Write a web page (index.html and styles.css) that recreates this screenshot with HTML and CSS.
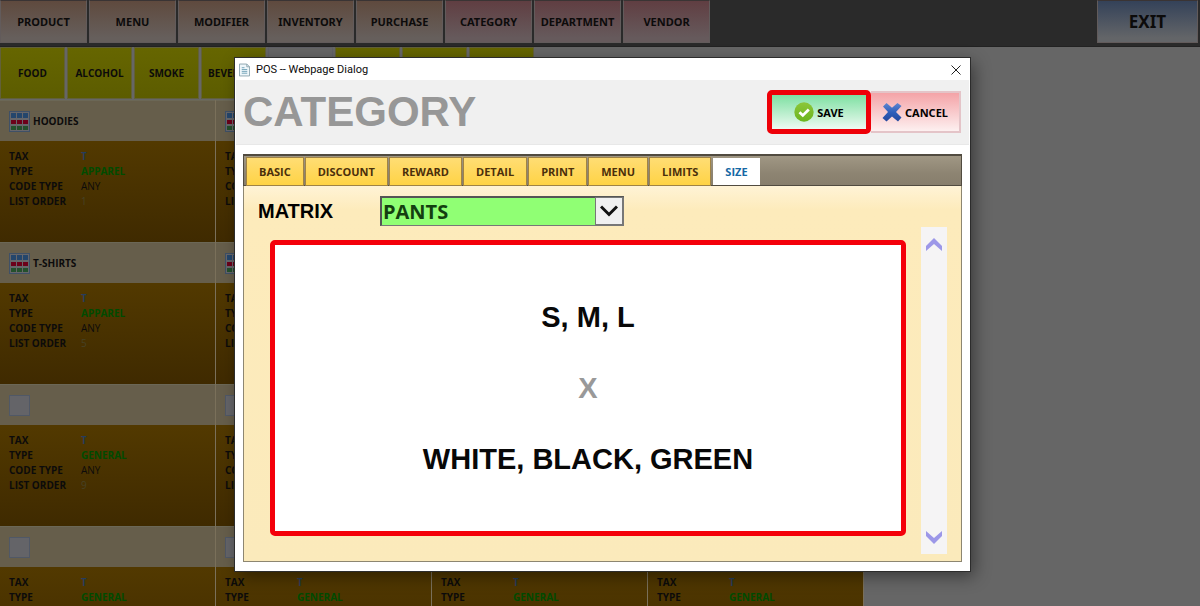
FILE: index.html
```html
<!DOCTYPE html>
<html lang="en">
<head>
<meta charset="utf-8">
<title>POS</title>
<link rel="stylesheet" href="styles.css">
</head>
<body>
<svg class="defs" aria-hidden="true">
  <symbol id="grid" viewBox="0 0 21 21">
    <rect x=".5" y=".5" width="20" height="20" fill="#66666a" stroke="#3f5066"/>
    <path fill="#24466c" d="M2 2h5v5H2zM8 2h5v5H8zM14 2h5v5h-5z"/>
    <path fill="#6c001a" d="M2 9h5v4H2zM8 9h5v4H8zM14 9h5v4h-5z"/>
    <path fill="#24502c" d="M2 15h5v4H2zM8 15h5v4H8zM14 15h5v4h-5z"/>
  </symbol>
</svg>
<div class="app">
  <header class="topbar">
    <nav class="modules">
      <button class="module">PRODUCT</button>
      <button class="module">MENU</button>
      <button class="module">MODIFIER</button>
      <button class="module">INVENTORY</button>
      <button class="module">PURCHASE</button>
      <button class="module rose">CATEGORY</button>
      <button class="module rose">DEPARTMENT</button>
      <button class="module rose">VENDOR</button>
    </nav>
    <button class="exit">EXIT</button>
  </header>
  <nav class="groups">
    <button class="group">FOOD</button>
    <button class="group">ALCOHOL</button>
    <button class="group">SMOKE</button>
    <button class="group">BEVERAGE</button>
    <button class="group current" aria-label="Current department"></button>
    <button class="group" aria-label="Department 6"></button>
    <button class="group" aria-label="Department 7"></button>
    <button class="group" aria-label="Department 8"></button>
  </nav>
  <main class="cards" id="cards"></main>
</div>

<section class="dialog" role="dialog" aria-labelledby="dialog-title">
  <div class="titlebar">
    <svg class="page-icon" viewBox="0 0 12 14"><path d="M.5.5h8l3 3v10H.5z" fill="#eef6fa" stroke="#8ba3ad"/><path d="M8.500 .5v3h3" fill="none" stroke="#8ba3ad"/><path d="M3 4.500h3M3 6.500h6M3 8.500h6M3 10.500h6" stroke="#6c9fb5"/></svg>
    <span>POS -- Webpage Dialog</span>
    <button class="close" aria-label="Close"><svg viewBox="0 0 10 10"><path d="M.5.5l9 9M9.500.5l-9 9" stroke="#222" fill="none"/></svg></button>
  </div>
  <div class="heading">
    <h1 id="dialog-title">CATEGORY</h1>
    <div class="actions">
      <button class="action save">
        <svg viewBox="0 0 20 20"><defs><linearGradient id="g" x2="0" y2="1"><stop stop-color="#8cc63a"/><stop offset="1" stop-color="#6bb51e"/></linearGradient></defs><circle cx="10" cy="10" r="9.700" fill="url(#g)"/><path d="M5.500 10.200l3.300 3.200 6-6" fill="none" stroke="#fff" stroke-width="2.800"/></svg>
        SAVE
      </button>
      <button class="action cancel">
        <svg viewBox="0 0 20 20"><defs><linearGradient id="b" x2="0" y2="1"><stop stop-color="#5f86d0"/><stop offset=".5" stop-color="#2f5fbb"/><stop offset="1" stop-color="#24479c"/></linearGradient></defs><path fill="url(#b)" d="M1 4.500L4.500 1 10 5.800 15.500 1 19.500 4 14 10l5.500 5.500-3.500 4-6-5-5.500 5L.5 16 6 10z"/></svg>
        CANCEL
      </button>
    </div>
  </div>
  <div class="content">
    <nav class="tabs" role="tablist">
      <button class="tab" role="tab">BASIC</button>
      <button class="tab" role="tab">DISCOUNT</button>
      <button class="tab" role="tab">REWARD</button>
      <button class="tab" role="tab">DETAIL</button>
      <button class="tab" role="tab">PRINT</button>
      <button class="tab" role="tab">MENU</button>
      <button class="tab" role="tab">LIMITS</button>
      <button class="tab active" role="tab" aria-selected="true">SIZE</button>
    </nav>
    <div class="panel">
      <div class="field">
        <label for="matrix">MATRIX</label>
        <div class="select">
          <select id="matrix"><option>PANTS</option></select>
          <span class="arrow"><svg viewBox="0 0 18 12"><path d="M1 1.500l8 8 8-8" fill="none" stroke="#111" stroke-width="3"/></svg></span>
        </div>
      </div>
      <div class="body">
        <div class="matrix">
          <p>S, M, L</p>
          <p class="times">X</p>
          <p>WHITE, BLACK, GREEN</p>
        </div>
        <div class="scroller">
          <button aria-label="Scroll up"><svg viewBox="0 0 16 13"><path d="M0 8L8 0l8 8v5L8 6 0 13z" fill="#9c97e8"/></svg></button>
          <button aria-label="Scroll down"><svg viewBox="0 0 16 13"><path d="M0 5l8 8 8-8V0L8 7 0 0z" fill="#9c97e8"/></svg></button>
        </div>
      </div>
    </div>
  </div>
</section>
<script src="cards.js"></script>
</body>
</html>
```
FILE: styles.css
```css
* { box-sizing: border-box; }
body { margin: 0; font-family: "Open Sans", "Liberation Sans", sans-serif; background: #666; color: #0c0b0b; }
button { margin: 0; font: inherit; color: inherit; }
p, h1, dl, dd { margin: 0; }
.defs { display: none; }

.app { height: 100vh; overflow: hidden; }
.topbar { display: flex; justify-content: space-between; height: 47px; padding: 0 2px 3px 0; background: #2a2a2a; border-bottom: 1px solid #222; }
.modules { display: grid; grid-template-columns: repeat(8, 1fr); gap: 2px; width: 710px; }
.module, .exit { padding: 0; border: 1px solid #625b5b; border-top-color: #3a3434; font: 700 11px "Noto Sans", sans-serif; }
.module { background: linear-gradient(#5f4a3e, #665f5c 90%); }
.rose { background: linear-gradient(#603e42, #665a5c 90%); }
.exit { width: 101px; background: linear-gradient(#344259, #636568 90%); font-size: 17px; }

.groups { display: flex; gap: 2px; height: 53px; padding-bottom: 1px; }
.group { width: 65px; padding: 0; border: 1px solid #626039; background: linear-gradient(#666600, #5c5c00); font-size: 10px; font-weight: 700; white-space: nowrap; text-align: center; }
.group.current { background: #666; border-color: #606066; }

.cards { display: grid; grid-template-columns: repeat(4, 1fr); width: 72%; }
.card { height: 142px; border-right: 1px solid #7a705a; background: linear-gradient(#523900 30%, #3f2a00); }
.card-head { display: flex; align-items: center; gap: 3px; height: 41px; padding-left: 9px; background: #665e4b; border-top: 1px solid #6b6756; font-size: 10px; font-weight: 700; }
.card-icon { width: 21px; height: 21px; }
.card-icon.blank { background: #646468; border: 1px solid #505866; }
.facts { display: grid; grid-template-columns: 72px 1fr; padding: 8px 0 0 9px; font-size: 10px; line-height: 15px; }
.facts dt { font-weight: 700; }
.facts .tax { color: #273d5c; font-weight: 700; }
.facts .type { color: #004b00; font-weight: 700; }
.facts .order { color: #464126; }

.dialog { position: absolute; top: 58px; left: 235px; right: 230px; background: #fff; border: 1px solid #fff; box-shadow: 0 0 0 1px #2c2c2c, 4px 5px 16px rgba(0, 0, 0, .45); }
.titlebar { display: flex; align-items: center; gap: 6px; height: 21px; padding: 0 8px 0 3px; font: 11px Roboto, sans-serif; }
.page-icon { width: 11px; height: 14px; }
.close { display: flex; margin-left: auto; padding: 0; border: 0; background: none; }
.close svg { width: 10px; height: 10px; }
.heading { display: flex; align-items: center; justify-content: space-between; height: 65px; padding: 0 8px 0 7px; background: #f0f0f0; border-bottom: 1px solid #e8e8e8; }
h1 { font: 700 42px "Liberation Sans", sans-serif; color: #979797; }
.actions { display: flex; align-items: center; }
.action { display: flex; align-items: center; justify-content: center; gap: 3px; height: 42px; padding: 0; font: 700 11px "Noto Sans", sans-serif; color: #000; }
.action svg { width: 20px; height: 20px; }
.action.save { width: 104px; height: 44px; border: 5px solid #ee0008; border-radius: 5px; background: linear-gradient(#7ee0a2, #eefaf2); }
.cancel { width: 90px; border: 2px solid #e4c4c8; border-left: 0; background: linear-gradient(#f4a3a7, #fdf0f0); }

.content { padding: 9px 7px 8px; }
.tabs { display: flex; align-items: flex-end; gap: 3px; height: 32px; padding: 0 3px; border: 1px solid #514b40; border-top-width: 2px; background: linear-gradient(#a09784, #8d8472 60%, #877e6d); }
.tab { height: 27px; padding: 0 12px; border: 0; background: linear-gradient(#ffdd74, #ffd345); font-size: 11px; font-weight: 700; color: #4b2f0b; box-shadow: 0 0 0 1px #a08345; }
.tab.active { background: #fff; color: #1668a4; box-shadow: none; }
.panel { padding: 9px 14px 7px; border: 1px solid #8d8671; border-top: 0; background: linear-gradient(#fff3d6, #fdebbb 24px, #fbeabb); }
.field { display: flex; align-items: center; height: 32px; }
.field label { width: 122px; font: 700 20px "Liberation Sans", sans-serif; color: #000; }
.select { position: relative; width: 244px; height: 30px; }
.select select { width: 100%; height: 100%; padding: 0 32px 0 1px; border: 1px solid #777; border-top: 2px solid #555; border-left: 2px solid #555; border-radius: 0; appearance: none; background: #90ff74; font: 700 20px "Open Sans", sans-serif; color: #143f10; }
.arrow { position: absolute; top: 1px; right: 1px; bottom: 1px; display: flex; align-items: center; justify-content: center; width: 28px; border: 1px solid #777; background: #f0f0f0; pointer-events: none; }
.arrow svg { width: 18px; height: 12px; }
.body { display: flex; justify-content: space-between; padding-left: 12px; }
.matrix { display: flex; flex-direction: column; align-items: center; justify-content: center; gap: 36px; flex: 1; height: 296px; margin: 13px 15px 0 0; border: 5px solid #f4000a; border-radius: 5px; background: #fff; font: 700 29px/35px "Liberation Sans", sans-serif; color: #080808; }
.matrix .times { color: #999; }
.scroller { display: flex; flex-direction: column; justify-content: space-between; width: 26px; height: 327px; padding: 11px 0 10px; background: #f5f4f5; }
.scroller button { display: flex; justify-content: center; padding: 0; border: 0; background: none; }
.scroller svg { width: 16px; height: 13px; }
```
FILE: cards.js
```javascript
const rows = [
  { name: "HOODIES", type: "APPAREL", order: "1" },
  { name: "T-SHIRTS", type: "APPAREL", order: "5" },
  { name: "", type: "GENERAL", order: "9" },
  { name: "", type: "GENERAL", order: "13" },
];
const card = ({ name, type, order }, column) => `
  <article class="card">
    <div class="card-head">${name ? `<svg class="card-icon"><use href="#grid"/></svg>` : `<span class="card-icon blank"></span>`}<span>${column === 0 ? name : ""}</span></div>
    <dl class="facts">
      <dt>TAX</dt><dd class="tax">T</dd>
      <dt>TYPE</dt><dd class="type">${type}</dd>
      <dt>CODE TYPE</dt><dd>ANY</dd>
      <dt>LIST ORDER</dt><dd class="order">${order}</dd>
    </dl>
  </article>`;
document.getElementById("cards").innerHTML = rows
  .flatMap((row) => [0, 1, 2, 3].map((column) => card(row, column)))
  .join("");
```
